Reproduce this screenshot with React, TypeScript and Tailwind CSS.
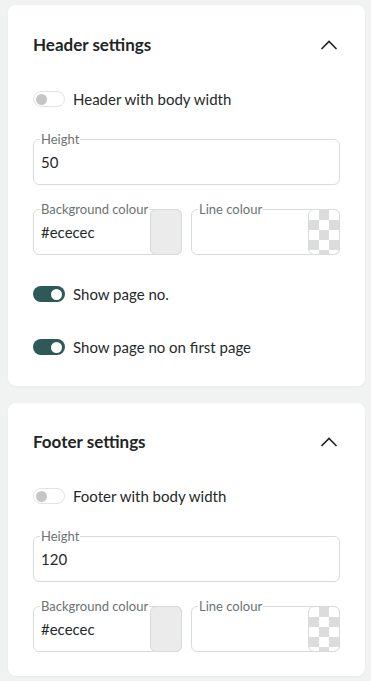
import { useState } from "react";

function Toggle({ on, label, onClick }: { on: boolean; label: string; onClick: () => void }) {
  return (
    <div className="flex items-center h-5 cursor-pointer" onClick={onClick}>
      {on ? (
        <div className="w-[32px] h-[16px] rounded-full bg-[#2d5a56] flex items-center justify-end pr-[3px]">
          <div className="w-[11px] h-[11px] rounded-full bg-white"></div>
        </div>
      ) : (
        <div className="w-[32px] h-[16px] rounded-full border border-[#e1e4e3] bg-white flex items-center pl-[2px]">
          <div className="w-[11px] h-[11px] rounded-full bg-[#c6c6c6]"></div>
        </div>
      )}
      <span className="ml-[8px] text-[15px] text-[#1f2a2a]">{label}</span>
    </div>
  );
}

function Field({ label, value, swatch }: { label: string; value: string; swatch?: "grey" | "check" }) {
  return (
    <div className="relative flex-1">
      <fieldset className="border border-[#d6dcda] rounded-md px-[6px] pb-[13px] h-[54px]">
        <legend className="px-[1px] text-[13px] leading-[16px] text-[#6b7372]">{label}</legend>
        <div className="mt-[5px] pl-[1px] text-[15px] leading-[20px] text-[#1f2a2a]">{value}</div>
      </fieldset>
      {swatch === "grey" && (
        <div className="absolute right-0 top-[8px] bottom-0 w-[32px] rounded-md border border-[#d6dcda] bg-[#ebebeb]"></div>
      )}
      {swatch === "check" && (
        <div className="absolute right-0 top-[8px] bottom-0 w-[32px] rounded-md border border-[#d6dcda] bg-[conic-gradient(#dcdcdc_25%,white_0_50%,#dcdcdc_0_75%,white_0)] bg-[length:20px_20px]"></div>
      )}
    </div>
  );
}

function Chevron() {
  return (
    <svg width="18" height="10" viewBox="0 0 18 10" fill="none" className="mr-[2px]">
      <polyline points="1.5,9 9,1.5 16.5,9" stroke="#222" strokeWidth="1.6" />
    </svg>
  );
}

function SettingsCard({ title, kind, height, extra }: { title: string; kind: string; height: string; extra?: boolean }) {
  const [bodyWidth, setBodyWidth] = useState(false);
  const [pageNo, setPageNo] = useState(true);
  const [firstPage, setFirstPage] = useState(true);

  return (
    <div className={`bg-white rounded-lg shadow-[0_1px_3px_rgba(0,0,0,0.04)] px-[25px] ${extra ? "pt-[28px] pb-[29px]" : "pt-[27px] pb-[24px]"}`}>
      <div className="flex items-center justify-between h-6">
        <h2 className="text-[17px] font-bold text-[#1f2626]">{title}</h2>
        <Chevron />
      </div>
      <div className="mt-[32px]">
        <Toggle on={bodyWidth} label={`${kind} with body width`} onClick={() => setBodyWidth(!bodyWidth)} />
      </div>
      <div className="mt-[22px]">
        <Field label="Height" value={height} />
      </div>
      <div className="mt-[16px] flex gap-[9px]">
        <Field label="Background colour" value="#ececec" swatch="grey" />
        <Field label="Line colour" value="" swatch="check" />
      </div>
      {extra && (
        <>
          <div className="mt-[29px]">
            <Toggle on={pageNo} label="Show page no." onClick={() => setPageNo(!pageNo)} />
          </div>
          <div className="mt-[33px]">
            <Toggle on={firstPage} label="Show page no on first page" onClick={() => setFirstPage(!firstPage)} />
          </div>
        </>
      )}
    </div>
  );
}

export default function App() {
  return (
    <div className="min-h-screen bg-[#f1f3f2] pt-[5px] pl-[8px] pr-[6px] pb-[5px] font-['Lato',sans-serif]">
      <SettingsCard title="Header settings" kind="Header" height="50" extra />
      <div className="mt-[17px]">
        <SettingsCard title="Footer settings" kind="Footer" height="120" />
      </div>
    </div>
  );
}
